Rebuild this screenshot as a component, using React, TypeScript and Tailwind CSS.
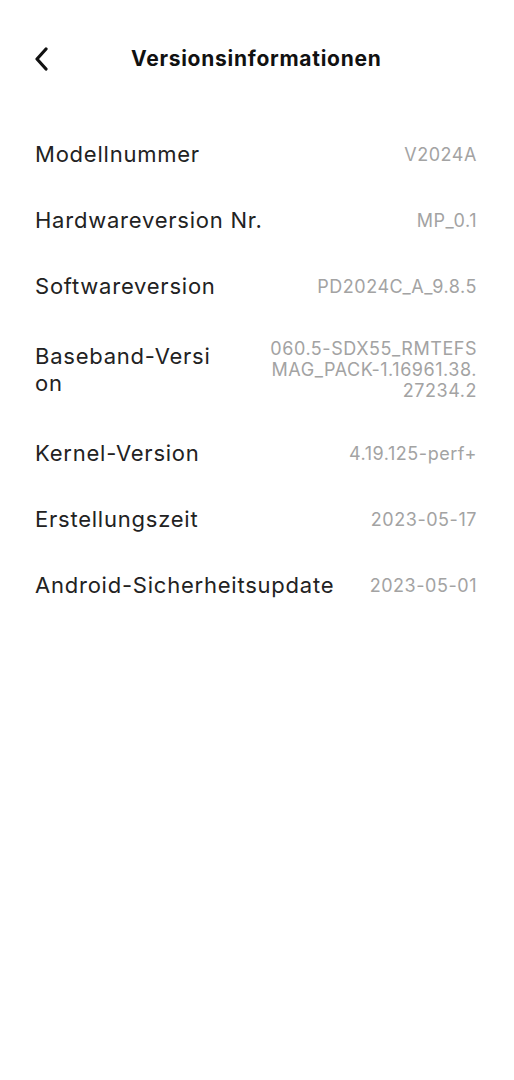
import React from "react";

const topRows = [
  ["Modellnummer", "V2024A"],
  ["Hardwareversion Nr.", "MP_0.1"],
  ["Softwareversion", "PD2024C_A_9.8.5"],
];
const bottomRows = [
  ["Kernel-Version", "4.19.125-perf+"],
  ["Erstellungszeit", "2023-05-17"],
  ["Android-Sicherheitsupdate", "2023-05-01"],
];

function Row({ l, v }: { l: string; v: string }) {
  return (
    <div className="h-[66px] flex items-center justify-between">
      <div className="text-[22px] text-[#222] tracking-[0.035em]">{l}</div>
      <div className="text-[18px] text-[#a3a3a3] tracking-[0.03em]">{v}</div>
    </div>
  );
}

export default function App() {
  const font = { fontFamily: "Inter, 'Noto Sans', sans-serif" };
  return (
    <div className="w-[514px] h-[1080px] bg-white" style={font}>
      <div className="h-[118px] pt-[44px] flex items-start">
        <div className="h-[30px] flex items-center pl-[33px]">
          <svg width="18" height="24" viewBox="0 0 18 24" fill="none">
            <path d="M13 2 L4 12 L13 22" stroke="#111" strokeWidth="3.2" strokeLinecap="round" strokeLinejoin="round" />
          </svg>
        </div>
        <div className="h-[30px] flex items-center ml-[80px] text-[21px] font-bold text-[#111] tracking-[0.035em]">
          Versionsinformationen
        </div>
      </div>
      <div className="pl-[35px] pr-[37px] pt-[3px]">
        {topRows.map(([l, v], i) => (
          <Row key={i} l={l} v={v} />
        ))}
        <div className="h-[101px] flex items-center justify-between">
          <div className="text-[22px] leading-[27px] text-[#222] tracking-[0.035em]">
            <div>Baseband-Versi</div>
            <div>on</div>
          </div>
          <div className="text-[18px] leading-[21px] text-[#a3a3a3] text-right tracking-[0.03em]">
            <div>060.5-SDX55_RMTEFS</div>
            <div>MAG_PACK-1.16961.38.</div>
            <div>27234.2</div>
          </div>
        </div>
        {bottomRows.map(([l, v], i) => (
          <Row key={i} l={l} v={v} />
        ))}
      </div>
    </div>
  );
}
